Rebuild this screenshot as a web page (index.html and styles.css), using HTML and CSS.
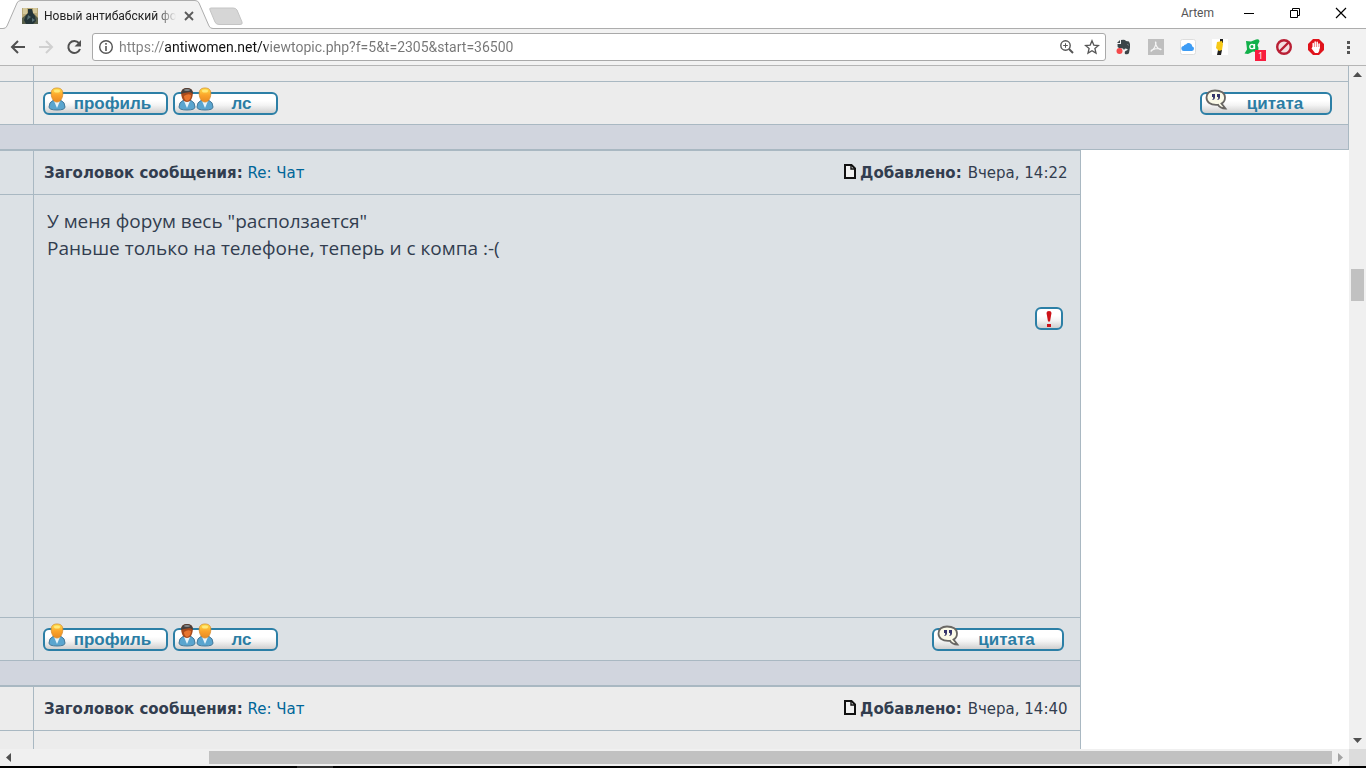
FILE: index.html
```
<!DOCTYPE html>
<html lang="ru">
<head>
  <meta charset="UTF-8">
  <title>Новый антибабский форум</title>
  <link rel="stylesheet" href="styles.css">
</head>
<body>

  <!-- shared button icons -->
  <svg class="defs" width="0" height="0">
    <defs>
      <linearGradient id="hair" x1="0" y1="0" x2="0" y2="1">
        <stop offset="0" stop-color="#ffe14a"/><stop offset="0.5" stop-color="#fba52c"/><stop offset="1" stop-color="#e98a22"/>
      </linearGradient>
      <symbol id="man" viewBox="0 0 18 24">
        <path d="M1 20 Q1 15 5 13.500 L13 13.500 Q17 15 17 20 Q17 23 9 23 Q1 23 1 20Z" fill="#5aa5cf" stroke="#44799a"/>
        <path d="M6 14 L9 21 L12 14Z" fill="#e8f4fa"/>
        <path d="M9 1 C13.500 1 15 3.500 14.800 7 C14.500 12 12 15 9 15 C6 15 3.500 12 3.200 7 C3 3.500 4.500 1 9 1Z" fill="url(#hair)" stroke="#d68b2e" stroke-width=".8"/>
        <ellipse cx="9" cy="4" rx="3" ry="1.500" fill="#ffe97a"/>
      </symbol>
      <symbol id="man-dark" viewBox="0 0 18 24">
        <path d="M1 20 Q1 15 5 13.500 L13 13.500 Q17 15 17 20 Q17 23 9 23 Q1 23 1 20Z" fill="#5aa5cf" stroke="#44799a"/>
        <path d="M6 14 L9 21 L12 14Z" fill="#e8f4fa"/>
        <path d="M9 1 C13.500 1 15 3.500 14.800 7 C14.500 12 12 15 9 15 C6 15 3.500 12 3.200 7 C3 3.500 4.500 1 9 1Z" fill="#a84a1c"/>
        <path d="M6 9 Q10 6 13 8 Q13 13 9 14 Q6 13 6 9Z" fill="#e8742e"/>
        <path d="M3 7 Q3 1 9 1 Q15 1 15 7 L12 5 L6 6Z" fill="#45403f"/>
        <ellipse cx="9" cy="3" rx="3" ry="1" fill="#85898b"/>
      </symbol>
      <symbol id="bubble" viewBox="0 0 23 22">
        <path d="M10 1.500 C16 1.500 20 4 20 8.500 C20 11.500 18.500 13.500 16.500 14.500 L20.500 19.500 C17 19.500 14.500 18.500 13 15.800 C5 16.500 1.500 13 1.500 8.500 C1.500 4 5 1.500 10 1.500Z" fill="#fbfae8" stroke="#696764" stroke-width="1.800"/>
        <path d="M7 5h3v3q0 3-3 3q2-1.500 1-3H7zM12 5h3v3q0 3-3 3q2-1.500 1-3h-1z" fill="#35356b"/>
      </symbol>
      <symbol id="page" viewBox="0 0 12 15">
        <path d="M1 1H7.500L11 4.500V14H1Z" fill="#f1f1f1" stroke="#111" stroke-width="2"/>
        <path d="M7 1V5H11" fill="none" stroke="#111" stroke-width="1.400"/>
      </symbol>
    </defs>
  </svg>

  <header class="tabstrip">
    <div class="tab">
      <svg class="tab-shape" width="216" height="29" viewBox="0 0 216 29">
        <path d="M0 29V28.500H3Q6 28.500 7 26L17 3Q18 .5 21 .5H195Q198 .5 199 3L209 26Q210 28.500 213 28.500H216V29Z" fill="#f2f2f2"/>
        <path d="M0 28.500H3Q6 28.500 7 26L17 3Q18 .5 21 .5H195Q198 .5 199 3L209 26Q210 28.500 213 28.500H216" fill="none" stroke="#adadad"/>
      </svg>
      <svg class="favicon" width="16" height="16" viewBox="0 0 16 16">
        <path fill="#b9a978" d="M0 0h16v16H0z"/>
        <path fill="#d3c798" d="M1 0h4v6H1zM11 0h4v5h-4z"/>
        <path fill="#59604a" d="M0 10l4-3 8-1 4 4v6H0z"/>
        <path fill="#243538" d="M6 1h4l1 4 2 3 1 5-3 3H4l-2-4 2-5 2-2z"/>
        <path fill="#587175" d="M6 7l3 2-4 3zM10 10l3 2-3 2z"/>
      </svg>
      <span class="tab-title">Новый антибабский форум</span>
      <button class="plain" aria-label="Закрыть вкладку">
        <svg width="10" height="10" viewBox="0 0 10 10"><path d="M1 1l8 8M9 1l-8 8" stroke="#5a5a5a" stroke-width="1.800"/></svg>
      </button>
    </div>
    <button class="plain newtab" aria-label="Новая вкладка">
      <svg width="36" height="19" viewBox="0 0 36 19"><path d="M3 1H25Q28 1 29 3L34 15Q35 17.500 32 17.500H11Q8 17.500 7 15L2 3Q1 1 3 1Z" fill="#d6d6d6" stroke="#c4c4c4"/></svg>
    </button>
    <div class="window-buttons">
      <span class="user">Artem</span>
      <button class="plain" aria-label="Свернуть"><svg width="12" height="12" viewBox="0 0 12 12"><path d="M1 6.500h10" stroke="#000"/></svg></button>
      <button class="plain" aria-label="Развернуть"><svg width="12" height="12" viewBox="0 0 12 12"><path d="M1.500 3.500h7v7h-7zM3.500 3.500v-2h7v7h-2" fill="none" stroke="#000"/></svg></button>
      <button class="plain" aria-label="Закрыть"><svg width="12" height="12" viewBox="0 0 12 12"><path d="M1 1l10 10M11 1L1 11" stroke="#000" stroke-width="1.200"/></svg></button>
    </div>
  </header>

  <nav class="toolbar">
    <button class="plain" aria-label="Назад"><svg width="16" height="16" viewBox="0 0 16 16"><path d="M15 8H2M8 2L2 8l6 6" fill="none" stroke="#505050" stroke-width="2"/></svg></button>
    <button class="plain" aria-label="Вперёд"><svg width="16" height="16" viewBox="0 0 16 16"><path d="M1 8h13M8 2l6 6-6 6" fill="none" stroke="#d0d0d0" stroke-width="2"/></svg></button>
    <button class="plain" aria-label="Обновить"><svg width="16" height="16" viewBox="0 0 16 16"><path d="M13 4.200A6 6 0 1 0 14 10" fill="none" stroke="#505050" stroke-width="2"/><path d="M15 1v6.500H8.500z" fill="#505050"/></svg></button>
    <div class="address">
      <svg width="16" height="16" viewBox="0 0 16 16"><circle cx="8" cy="8" r="6.300" fill="none" stroke="#555" stroke-width="1.400"/><path d="M8 7v5M8 4v1.800" stroke="#555" stroke-width="1.600"/></svg>
      <input class="url" type="text" aria-label="Адрес" value="https://antiwomen.net/viewtopic.php?f=5&amp;t=2305&amp;start=36500">
      <svg width="16" height="16" viewBox="0 0 16 16"><circle cx="6.500" cy="6.500" r="4.700" fill="none" stroke="#555" stroke-width="1.400"/><path d="M10 10l4 4" stroke="#555" stroke-width="2"/><path d="M4.200 6.500h4.600M6.500 4.200v4.600" stroke="#555"/></svg>
      <svg width="16" height="16" viewBox="0 0 16 16"><path d="M8 1.800l1.800 4.300 4.700.4-3.600 3 1.100 4.600L8 11.700l-4 2.400 1.100-4.600-3.600-3 4.700-.4z" fill="none" stroke="#555" stroke-width="1.300"/></svg>
    </div>
    <div class="extensions">
      <button class="plain" aria-label="Evernote"><svg width="16" height="16" viewBox="0 0 16 16"><path d="M5 1q4-1 5 1l3 .5q1.500 2 1 6L13 14q-1 2-4 1-1-3 1.500-3.500l1-.5v-1L9 9.500 8 11l-1-1.500-4-.5Q1 8 1.500 5H5z" fill="#3c4448"/><path d="M4 1v3H1z" fill="#3c4448"/><path d="M11 5.500q1.500-.5 1.800 1z" fill="#f2f2f2"/><circle cx="3.500" cy="12" r="3" fill="#f4494b"/></svg></button>
      <button class="plain" aria-label="Adobe Acrobat"><svg width="16" height="16" viewBox="0 0 16 16"><path d="M0 0h16v16H0z" fill="#bfbfbf"/><path d="M7.500 3c1 0 0 4-1 5.500S3 13 3 12s4-2.500 7-2.500 4 1.500 2 1S7 6 7.500 3z" fill="none" stroke="#f5f5f5" stroke-width="1.200"/></svg></button>
      <button class="plain" aria-label="iCloud"><svg width="16" height="16" viewBox="0 0 16 16"><rect x=".5" y=".5" width="15" height="15" rx="2" fill="#fff" stroke="#ddd"/><path d="M4 12a2.500 2.500 0 0 1-.3-5A2 2 0 0 1 6 5.500a3.500 3.500 0 0 1 6.300 2A2.300 2.300 0 0 1 12 12z" fill="#3d9cf5"/></svg></button>
      <button class="plain" aria-label="Часы"><svg width="16" height="16" viewBox="0 0 16 16"><path d="M0 0h16v16H0z" fill="#fff"/><path d="M8 0h3v4H8zM6 11h4l-1 5H5z" fill="#222"/><path d="M5 3l5-1 1 3-1 6-3 1-3-3z" fill="#f7c917"/></svg></button>
      <button class="plain avast" aria-label="Avast"><svg width="16" height="16" viewBox="0 0 16 16"><path d="M2 2l5 .5L12 .5q3.500-1 3.500 2L13.500 6l1 3-.5 4.500-5-1L4 15l-3.500-.5L3 10.500 2.500 6z" fill="#11b04a"/><circle cx="8" cy="7.500" r="2.200" fill="none" stroke="#fff" stroke-width="1.300"/><path d="M10.500 5v5" stroke="#fff" stroke-width="1.300"/></svg><span class="badge">1</span></button>
      <button class="plain" aria-label="Блокировка"><svg width="16" height="16" viewBox="0 0 16 16"><circle cx="8" cy="8" r="6.800" fill="#f3dfe2" stroke="#b91f34" stroke-width="2.400"/><path d="M3.500 12.500l9-9" stroke="#b91f34" stroke-width="2.400"/></svg></button>
      <button class="plain" aria-label="AdBlock"><svg width="16" height="16" viewBox="0 0 16 16"><path d="M5 0h6l5 5v6l-5 5H5l-5-5V5z" fill="#e0131b"/><path d="M5.200 9V4.500M7.200 8V3M9.200 8V3.300M11.100 9V5" stroke="#fff" stroke-width="1.500" stroke-linecap="round"/><path d="M4.500 8h7.300l-.6 4L10 14H7L3.500 9.500z" fill="#fff"/></svg></button>
      <button class="plain" aria-label="Меню"><svg width="16" height="16" viewBox="0 0 16 16"><path d="M7 2h3v3H7zM7 7h3v3H7zM7 12h3v3H7z" fill="#555"/></svg></button>
    </div>
  </nav>

  <div class="viewport">
    <main class="forum">

      <section class="post post-wide">
        <div class="row row-cut"><div class="side"></div><div class="cell"></div></div>
        <div class="row">
          <div class="side"></div>
          <div class="cell actions">
            <button class="btn profile"><svg class="icon" width="18" height="24"><use href="#man"/></svg>профиль</button>
            <button class="btn pm"><svg class="icon" width="18" height="24"><use href="#man-dark"/></svg><svg class="icon second" width="18" height="24"><use href="#man"/></svg>лс</button>
            <button class="btn quote"><svg class="icon" width="23" height="22"><use href="#bubble"/></svg>цитата</button>
          </div>
        </div>
        <div class="spacer"></div>
      </section>

      <article class="post post-alt">
        <div class="row">
          <div class="side"></div>
          <div class="cell head">
            <div><b>Заголовок сообщения:</b> <a href="#">Re: Чат</a></div>
            <div class="date"><svg width="12" height="15"><use href="#page"/></svg><b>Добавлено:</b> Вчера, 14:22</div>
          </div>
        </div>
        <div class="row">
          <div class="side"></div>
          <div class="cell message">
            <p>У меня форум весь "расползается"<br>Раньше только на телефоне, теперь и с компа :-(</p>
            <button class="btn report" aria-label="Пожаловаться"><svg width="8" height="18" viewBox="0 0 8 18"><path d="M1.500 3Q1.500 1 4 1T6.500 3L5 11.500H3zM2 14h4v3H2z" fill="#cc1218"/></svg></button>
          </div>
        </div>
        <div class="row">
          <div class="side"></div>
          <div class="cell actions">
            <button class="btn profile"><svg class="icon" width="18" height="24"><use href="#man"/></svg>профиль</button>
            <button class="btn pm"><svg class="icon" width="18" height="24"><use href="#man-dark"/></svg><svg class="icon second" width="18" height="24"><use href="#man"/></svg>лс</button>
            <button class="btn quote"><svg class="icon" width="23" height="22"><use href="#bubble"/></svg>цитата</button>
          </div>
        </div>
        <div class="spacer"></div>
      </article>

      <article class="post">
        <div class="row">
          <div class="side"></div>
          <div class="cell head">
            <div><b>Заголовок сообщения:</b> <a href="#">Re: Чат</a></div>
            <div class="date"><svg width="12" height="15"><use href="#page"/></svg><b>Добавлено:</b> Вчера, 14:40</div>
          </div>
        </div>
        <div class="row">
          <div class="side"></div>
          <div class="cell message"></div>
        </div>
      </article>

    </main>

    <div class="vscroll">
      <svg width="9" height="5" viewBox="0 0 9 5"><path d="M4.500 0L9 5H0z" fill="#505050"/></svg>
      <div class="track"><div class="thumb"></div></div>
      <svg width="9" height="5" viewBox="0 0 9 5"><path d="M0 0h9L4.500 5z" fill="#505050"/></svg>
    </div>
    <div class="hscroll">
      <svg width="5" height="9" viewBox="0 0 5 9"><path d="M5 0v9L0 4.500z" fill="#505050"/></svg>
      <div class="track"><div class="thumb"></div></div>
      <svg width="5" height="9" viewBox="0 0 5 9"><path d="M0 0v9l5-4.500z" fill="#a3a3a3"/></svg>
    </div>
    <div class="corner"></div>
  </div>

  <footer class="taskbar"><div class="task"></div></footer>

</body>
</html>
```
FILE: styles.css
```
* { box-sizing: border-box; }
body { margin: 0; height: 100vh; display: flex; flex-direction: column; overflow: hidden; background: #fff; font-family: "DejaVu Sans", Verdana, sans-serif; font-size: 15px; color: #323d4f; }
svg { display: block; flex: none; }
.defs { position: absolute; }
.plain { display: flex; padding: 0; border: 0; background: none; }

/* browser tabs */
.tabstrip { display: flex; height: 29px; flex: none; border-bottom: 1px solid #adadad; font-family: Roboto, sans-serif; font-size: 12px; color: #222; }
.tab { position: relative; display: flex; align-items: center; width: 208px; height: 29px; padding: 2px 14px 0 22px; }
.tab-shape { position: absolute; left: 0; top: 0; }
.favicon, .tab-title, .tab .plain { position: relative; }
.tab-title { flex: 1; margin: 0 8px 0 6px; overflow: hidden; white-space: nowrap; -webkit-mask-image: linear-gradient(to right, #000 85%, transparent); mask-image: linear-gradient(to right, #000 85%, transparent); }
.newtab { align-self: center; padding-top: 4px; }
.window-buttons { display: flex; align-items: center; gap: 34px; margin-left: auto; padding: 0 19px 2px 0; }
.user { margin-right: -5px; font-size: 12px; color: #555; }

/* toolbar */
.toolbar { display: flex; align-items: center; height: 37px; flex: none; gap: 12px; padding: 0 10px; background: #f2f2f2; border-bottom: 1px solid #b5b5b5; }
.address { display: flex; align-items: center; flex: 1; height: 28px; gap: 9px; margin: 0 -2px; padding: 0 5px; background: #fff; border: 1px solid #a9a9a9; border-radius: 3px; }
.url { flex: 1; margin-left: -4px; padding: 0; border: 0; outline: 0; font-family: Roboto, sans-serif; font-size: 14px; color: transparent; background: linear-gradient(to right, #808080 3.28em, #111 3.28em, #111 10.5em, #757575 10.5em); -webkit-background-clip: text; background-clip: text; }
.extensions { display: flex; gap: 16px; }
.avast { position: relative; }
.badge { position: absolute; left: 11px; top: 11px; width: 11px; height: 11px; background: #f81d3f; color: #fff; font: 9px/11px "Open Sans", sans-serif; text-align: center; }

/* page area with its scrollbars */
.viewport { flex: 1; min-height: 0; display: grid; grid-template-columns: 1fr 17px; grid-template-rows: 1fr 17px; }
.forum { overflow: hidden; min-height: 0; }
.vscroll, .hscroll { display: flex; align-items: center; justify-content: space-between; background: #f0f0f0; }
.vscroll { flex-direction: column; padding: 6px 0; }
.hscroll { padding: 0 6px; }
.track { flex: 1; display: flex; }
.vscroll .track { flex-direction: column; padding-top: 192px; }
.hscroll .track { padding: 0 6px 0 198px; }
.thumb { background: #c1c1c1; }
.vscroll .thumb { width: 13px; height: 32px; }
.hscroll .thumb { flex: 1; height: 13px; }
.corner { background: #dcdcdc; }
.taskbar { height: 2px; flex: none; padding-left: 297px; background: #000; }
.task { width: 36px; height: 2px; background: #2e2e2e; }

/* posts */
.post { width: 80.1%; border-right: 1px solid #a9b8c2; border-top: 1px solid #a9b8c2; background: #ececec; }
.post-wide { width: 100%; border-top: 0; }
.post-alt { background: #dce1e5; }
.row { display: flex; border-bottom: 1px solid #a9b8c2; }
.side { width: 34px; flex: none; border-right: 1px solid #a9b8c2; }
.cell { flex: 1; }
.row-cut { height: 16px; }
.spacer { height: 25px; background: #d1d5de; border-bottom: 1px solid #a9b8c2; }
.head { display: flex; justify-content: space-between; padding: 13px 12px 11px 10px; line-height: 19px; }
.head a { color: #006699; text-decoration: none; }
.date { display: flex; gap: 6px; }
.date svg { margin-right: -2px; }
.message { display: flex; flex-direction: column; min-height: 422px; padding: 13px 17px 13px 13px; }
.message p { margin: 0; font-family: "Open Sans", "Trebuchet MS", sans-serif; font-size: 19px; line-height: 27px; }
.report { align-self: flex-end; width: 28px; margin-top: 45px; }
.actions { display: flex; gap: 5px; padding: 10px 16px 9px 9px; }

/* glossy buttons */
.btn { position: relative; display: flex; align-items: center; justify-content: center; height: 23px; padding: 0; border: 2px solid #2c7fa6; border-radius: 6px; background: linear-gradient(#fff 35%, #f3f3f3 60%, #cfcfcf); font: bold 17px/17px "Liberation Sans", Arial, sans-serif; color: #2b7da4; }
.icon { position: absolute; left: 3px; bottom: 2px; }
.second { left: 21px; }
.profile { width: 125px; padding-left: 14px; }
.pm { width: 105px; padding-left: 32px; }
.quote { width: 132px; margin-left: auto; padding-left: 18px; }
```
